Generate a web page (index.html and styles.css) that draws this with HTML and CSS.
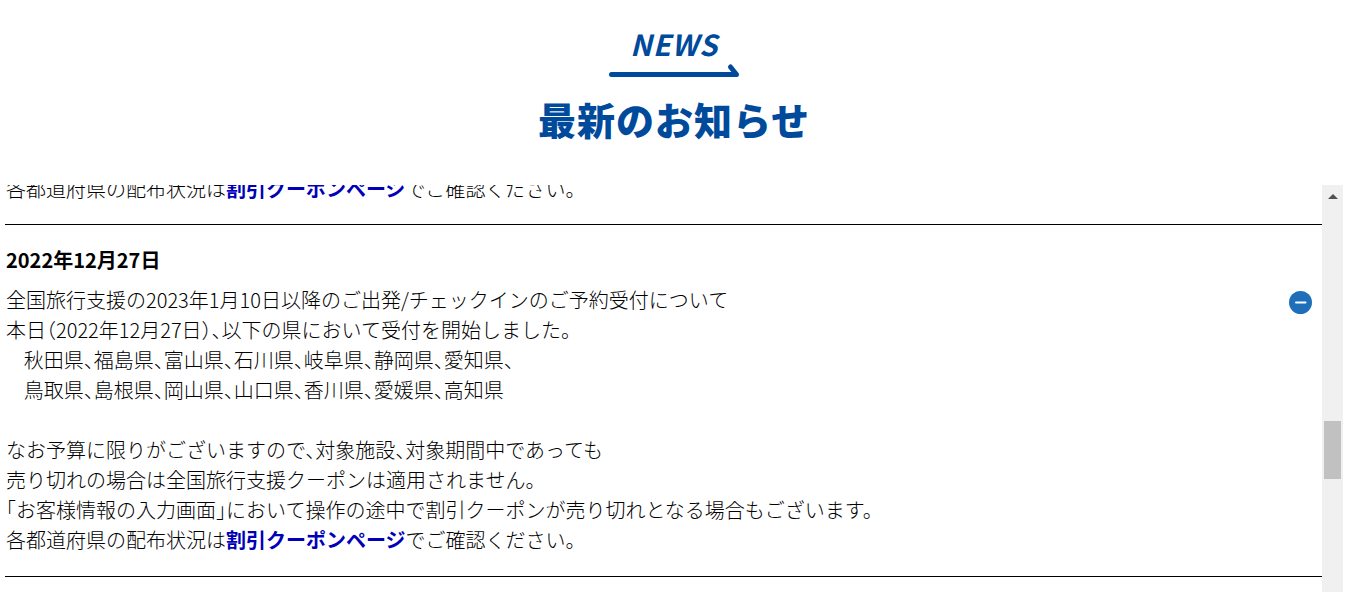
FILE: index.html
```html
<!DOCTYPE html>
<html lang="ja">
<head>
    <meta charset="UTF-8">
    <meta name="viewport" content="width=device-width, initial-scale=1.0">
    <title>最新のお知らせ</title>
    <link rel="stylesheet" href="styles.css">
</head>
<body>
    <section class="news">
        <header class="news-header">
            <p class="news-en">NEWS</p>
            <svg class="news-arrow" width="132" height="16" viewBox="0 0 132 16" fill="none" stroke="#004a9c" stroke-width="5" stroke-linecap="round" stroke-linejoin="round" aria-hidden="true">
                <path d="M3.5 12.5H128.500L122.500 5"/>
            </svg>
            <h2 class="news-title">最新のお知らせ</h2>
        </header>

        <div class="news-box">
            <div class="news-list">
                <article class="news-item news-item-prev">
                    <p class="news-text">各都道府県の配布状況は<a href="#">割引クーポンページ</a>でご確認ください。</p>
                </article>
                <article class="news-item">
                    <h3 class="news-date">2022年12月27日</h3>
                    <div class="news-body">
                        <p class="news-text">
                            全国旅行支援の2023年1月10日以降のご出発/チェックインのご予約受付について<br>
                            本日（2022年12月27日）、以下の県において受付を開始しました。<br>
                            &nbsp;&nbsp;&nbsp;&nbsp;秋田県、福島県、富山県、石川県、岐阜県、静岡県、愛知県、<br>
                            &nbsp;&nbsp;&nbsp;&nbsp;鳥取県、島根県、岡山県、山口県、香川県、愛媛県、高知県<br>
                            <br>
                            なお予算に限りがございますので、対象施設、対象期間中であっても<br>
                            売り切れの場合は全国旅行支援クーポンは適用されません。<br>
                            「お客様情報の入力画面」において操作の途中で割引クーポンが売り切れとなる場合もございます。<br>
                            各都道府県の配布状況は<a href="#">割引クーポンページ</a>でご確認ください。
                        </p>
                        <button class="toggle" type="button" aria-label="閉じる" aria-expanded="true">
                            <svg width="23" height="23" viewBox="0 0 23 23" aria-hidden="true">
                                <circle cx="11.5" cy="11.5" r="11.5" fill="#1e6eb9"/>
                                <path d="M7 11.500H16.500" stroke="#fff" stroke-width="2" stroke-linecap="round"/>
                            </svg>
                        </button>
                    </div>
                </article>
            </div>
            <div class="scrollbar" aria-hidden="true">
                <span class="scroll-up"></span>
                <span class="scroll-thumb"></span>
            </div>
        </div>
    </section>
</body>
</html>
```
FILE: styles.css
```css
* {
    box-sizing: border-box;
}

body {
    margin: 0;
    background: #fff;
    color: #000;
    font-family: "Noto Sans CJK JP", sans-serif;
    font-size: 20px;
    line-height: 30px;
}

h2, h3, p {
    margin: 0;
}

.news {
    min-height: 100vh;
    padding: 24px 18px 0 5px;
    display: flex;
    flex-direction: column;
}

.news-header {
    display: flex;
    flex-direction: column;
    align-items: center;
    color: #004a9c;
    padding-bottom: 39px;
}

.news-en {
    font-size: 29px;
    font-weight: 700;
    font-style: italic;
    line-height: 38px;
    letter-spacing: 1px;
}

.news-title {
    margin-top: 14px;
    font-size: 38px;
    font-weight: 900;
    line-height: 54px;
    letter-spacing: 1px;
}

.news-box {
    flex: 1;
    display: flex;
}

.news-list {
    flex: 1;
    overflow: hidden;
}

.news-item {
    padding: 20px 0 21px;
    border-bottom: 1px solid #000;
}

/* scrolled past, only the last line is still in view */
.news-item-prev {
    height: 40px;
    padding: 0 0 20px;
    display: flex;
    align-items: flex-end;
}

.news-date {
    margin-bottom: 10px;
    padding-left: 1px;
    font-size: 20px;
    font-weight: 700;
}

.news-body {
    display: flex;
    justify-content: space-between;
    align-items: flex-start;
}

.news-text {
    padding-left: 1px;
    font-weight: 300;
    font-feature-settings: "halt";
}

.news-text a {
    color: #0000b8;
    font-weight: 700;
    text-decoration: none;
}

.toggle {
    margin: 6px 10px 0 0;
    padding: 0;
    border: 0;
    background: none;
    display: flex;
    cursor: pointer;
}

.scrollbar {
    width: 21px;
    padding: 9px 2px 0;
    display: flex;
    flex-direction: column;
    align-items: center;
    background: #f0f0f0;
}

.scroll-up {
    border: 5px solid transparent;
    border-top: 0;
    border-bottom-color: #505050;
}

.scroll-thumb {
    width: 100%;
    height: 58px;
    margin-top: 222px;
    background: #c1c1c1;
}
```
